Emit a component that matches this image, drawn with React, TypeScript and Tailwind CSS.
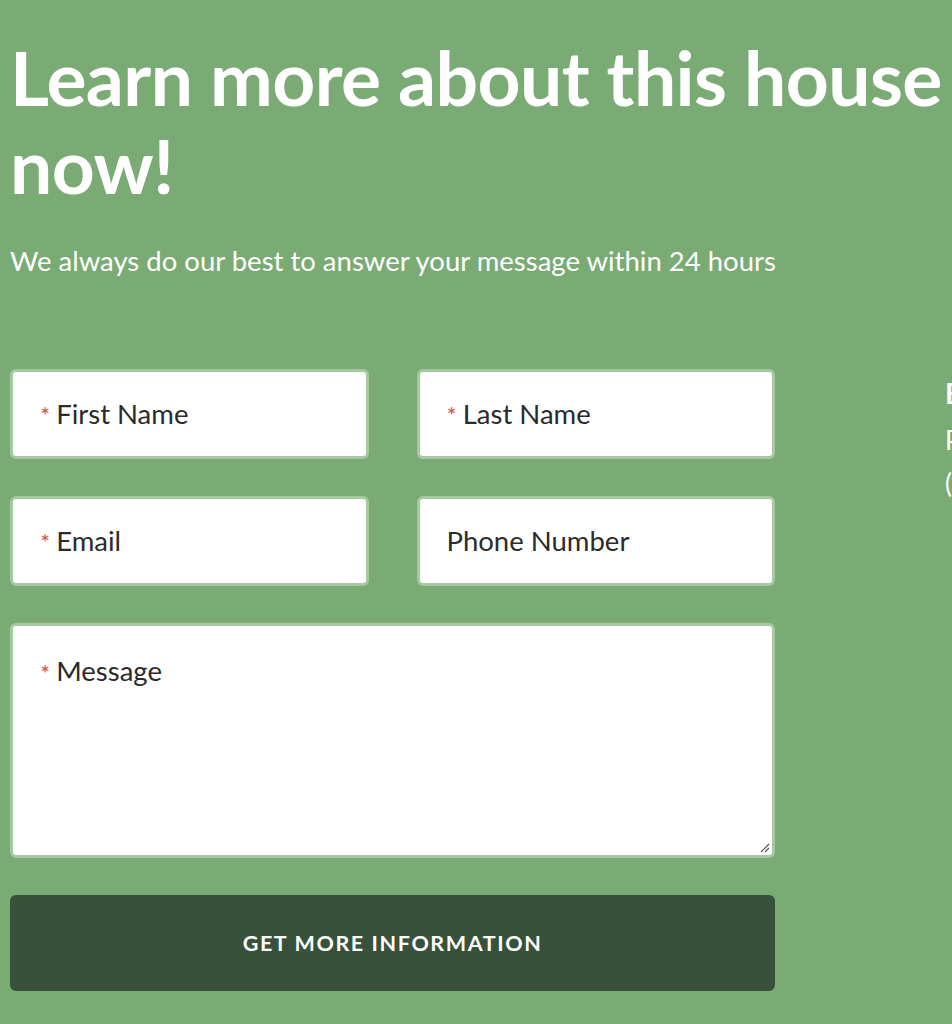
export default function App() {
  const field =
    "h-[90px] rounded-md border-[3px] border-[#a6c9a1] bg-white px-[27px] flex items-center text-[27.5px] text-[#2b2b2b]";
  const star = <span className="text-[#d9534f] text-[24px] mr-[6px] relative top-[1px]">*</span>;

  return (
    <div
      className="min-h-[1024px] w-full overflow-hidden bg-[#7aab74] px-[10px] pt-[33px]"
      style={{ fontFamily: "Lato, 'Open Sans', sans-serif" }}
    >
      <h1 className="text-[75px] font-bold leading-[88px] tracking-[-0.6px] text-white whitespace-nowrap">
        Learn more about this house
        <br />
        now!
      </h1>
      <p className="mt-[35px] text-[27.5px] leading-[34px] text-white">
        We always do our best to answer your message within 24 hours
      </p>

      <div className="mt-[91px] flex gap-[170px]">
        <form className="w-[765px] shrink-0 flex flex-col">
          <div className="grid grid-cols-2 gap-x-[48px] gap-y-[37px]">
            <div className={field}>{star}First Name</div>
            <div className={field}>{star}Last Name</div>
            <div className={field}>{star}Email</div>
            <div className={field}>Phone Number</div>
          </div>
          <div className="relative mt-[37px] h-[235px] rounded-md border-[3px] border-[#a6c9a1] bg-white px-[27px] pt-[24px] text-[27.5px] text-[#2b2b2b]">
            {star}Message
            <svg className="absolute bottom-[2px] right-[2px]" width="12" height="12" viewBox="0 0 12 12">
              <path d="M11 3 L3 11 M11 7 L7 11" stroke="#555" strokeWidth="1.2" />
            </svg>
          </div>
          <button
            type="button"
            className="mt-[37px] h-[96px] rounded-md bg-[#37513a] text-[21.5px] font-bold tracking-[1.6px] text-white"
          >
            GET MORE INFORMATION
          </button>
        </form>

        <div className="shrink-0 pt-[2px] text-white whitespace-nowrap">
          <div className="text-[28px] font-bold leading-[44px]">Email</div>
          <div className="mt-[4px] text-[26px] leading-[43px]">Phone</div>
          <div className="text-[26px] leading-[43px]">(555) 555-5555</div>
        </div>
      </div>
    </div>
  );
}
